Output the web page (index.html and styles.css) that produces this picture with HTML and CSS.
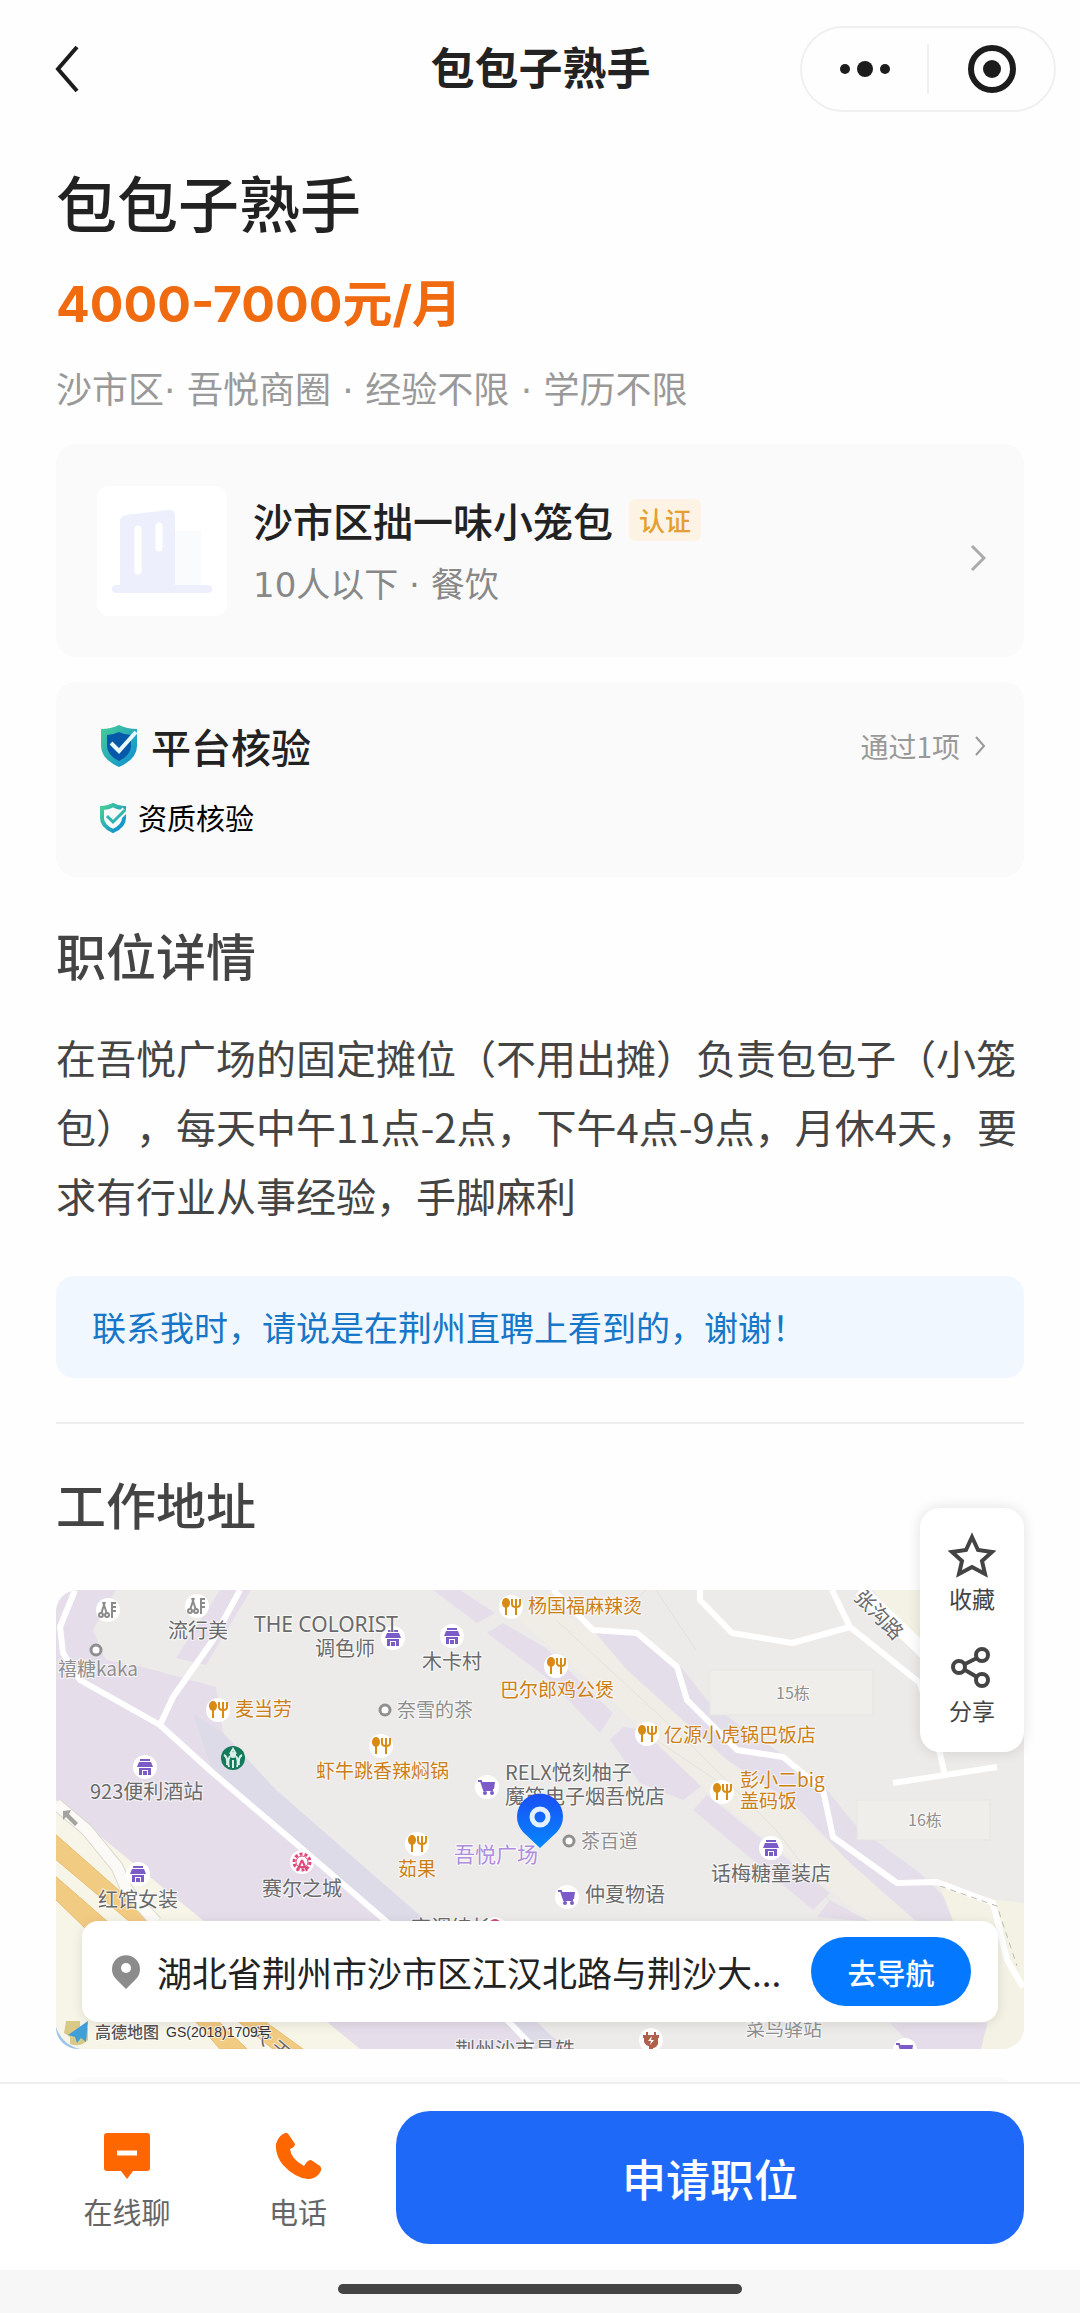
FILE: index.html
```html
<!DOCTYPE html>
<html lang="zh-CN">
<head>
  <meta charset="UTF-8">
  <meta name="viewport" content="width=device-width, initial-scale=1.0">
  <title>包包子熟手</title>
  <link rel="stylesheet" href="styles.css">
</head>

<body>

<header class="nav">
  <button class="back-btn" aria-label="返回">
    <svg width="24" height="48" viewBox="0 0 24 48"><path d="M22 2L3 24l19 22" fill="none" stroke="#1c1c1c" stroke-width="4"/></svg>
  </button>
  <div class="nav-title">包包子熟手</div>
  <div class="capsule">
    <button aria-label="更多">
      <svg width="54" height="20" viewBox="0 0 54 20" fill="#1c1c1c"><circle cx="7" cy="10" r="5"/><circle cx="27" cy="10" r="8"/><circle cx="47" cy="10" r="5"/></svg>
    </button>
    <button aria-label="关闭">
      <svg width="48" height="48" viewBox="0 0 48 48"><circle cx="24" cy="24" r="21" fill="none" stroke="#1c1c1c" stroke-width="6"/><circle cx="24" cy="24" r="9" fill="#1c1c1c"/></svg>
    </button>
  </div>
</header>

<main class="container">
  <h1>包包子熟手</h1>
  <div class="salary">4000-7000元/月</div>
  <div class="tags">沙市区· 吾悦商圈 · 经验不限 · 学历不限</div>

  <a class="card company" href="#">
    <svg class="company-logo" width="130" height="130" viewBox="0 0 130 130">
      <rect width="130" height="130" rx="12" fill="#fff"/>
      <path d="M78 45h26v54H78z" fill="#f9fbfc"/>
      <path d="M23 99V36q0-6 6-7l42-5q7-1 7 6v69z" fill="#eeeffc"/>
      <path d="M41 43v42M62 40v22" stroke="#fff" stroke-width="7" stroke-linecap="round"/>
      <path d="M19 103h92" stroke="#eeeffc" stroke-width="8" stroke-linecap="round"/>
    </svg>
    <div class="company-info">
      <div class="company-name">沙市区拙一味小笼包 <span class="badge">认证</span></div>
      <div class="company-sub">10人以下 · 餐饮</div>
    </div>
    <svg class="arrow" width="16" height="28" viewBox="0 0 16 28"><path d="M2 2l12 12L2 26" fill="none" stroke="#aaa" stroke-width="3"/></svg>
  </a>

  <section class="card verify">
    <div class="verify-head">
      <svg width="40" height="44" viewBox="0 0 40 44">
        <defs>
          <linearGradient id="shield" x1="0" y1="0" x2="1" y2="1"><stop offset="0" stop-color="#48cf94"/><stop offset="1" stop-color="#0b8bd8"/></linearGradient>
        </defs>
        <path d="M20 1q8 4 18 4v17q0 13-18 21Q2 35 2 22V5q10 0 18-4z" fill="url(#shield)"/>
        <path d="M20 8q6 3 12 3v11q0 9-12 15Q8 31 8 22V11q6 0 12-3z" fill="#0659a8"/>
        <path d="M12 19l8 8L37 8" fill="none" stroke="#e9fbff" stroke-width="4"/>
      </svg>
      <h2>平台核验</h2>
      <a class="verify-more" href="#">通过1项
        <svg width="12" height="20" viewBox="0 0 12 20"><path d="M2 1l8 9-8 9" fill="none" stroke="#999" stroke-width="2"/></svg>
      </a>
    </div>
    <div class="verify-item">
      <svg width="28" height="32" viewBox="0 0 28 32">
        <path d="M14 3q5 3 11 3v10q0 8-11 13Q3 24 3 16V6q6 0 11-3z" fill="none" stroke="url(#shield)" stroke-width="4"/>
        <path d="M8 14l6 6L26 8" fill="none" stroke="#fafafa" stroke-width="7"/>
        <path d="M8 14l6 6L26 8" fill="none" stroke="#2db3b0" stroke-width="3"/>
      </svg>
      资质核验
    </div>
  </section>

  <section class="detail">
    <h2>职位详情</h2>
    <p>在吾悦广场的固定摊位（不用出摊）负责包包子（小笼包），每天中午11点-2点，下午4点-9点，月休4天，要求有行业从事经验，手脚麻利</p>
    <div class="notice">联系我时，请说是在荆州直聘上看到的，谢谢！</div>
  </section>

  <section class="address">
    <h2>工作地址</h2>
    <div class="map">
      <svg class="map-canvas" viewBox="0 0 968 459">
        <defs>
          <g id="food">
            <circle r="12" fill="#fff"/>
            <ellipse cx="-5" cy="-4" rx="4" ry="5" fill="#d88a12"/>
            <path d="M-5 0v8M5-1v9M1-8v5q0 3 4 3t4-3v-5M5-8v8" fill="none" stroke="#d88a12" stroke-width="2"/>
          </g>
          <g id="shop">
            <circle r="12" fill="#fff"/>
            <path d="M-5-8H5V-6H-5zM-6-5H6L8 0H-8zM-6 1H6V8H3V3H-3V8H-6zM-2 4H2V8H-2z" fill="#7b5bc8"/>
          </g>
          <g id="cart">
            <circle r="12" fill="#fff"/>
            <path d="M-9-6h3l3 9h9" fill="none" stroke="#7b5bc8" stroke-width="2"/>
            <path d="M-5-5H8L7 2H-3z" fill="#7b5bc8"/>
            <circle cx="-2" cy="6" r="2" fill="#7b5bc8"/><circle cx="5" cy="6" r="2" fill="#7b5bc8"/>
          </g>
          <g id="scissors" fill="none" stroke="#8b8b8b" stroke-width="2">
            <circle r="12" fill="#fff" stroke="none"/>
            <path d="M-5-8L-1 4M-3-8L-7 4M4-8V8M4-7H8M4-3H8M4 1H8"/>
            <circle cx="-7" cy="5" r="2"/><circle cx="-1" cy="5" r="2"/>
          </g>
          <circle id="dot" r="5" fill="#fff" stroke="#8f8f8f" stroke-width="3"/>
        </defs>

        <rect width="968" height="459" fill="#ecebe9"/>

        <!-- blocks -->
        <g fill="#e5deea">
          <path d="M0 0h60L37 40l13 30 37 7 73 20 7 46 53 57 141 123 149 136H0z"/>
          <path d="M164 0h31l-45 75-30-7z"/>
          <path d="M377 0h27l35 23-18 10z"/>
          <path d="M431 43l16-10 43 25 67 65-13 20-54-56z"/>
          <path d="M567 137l40 5 44 50-24 18-43-17-30-43z"/>
          <path d="M651 205l123 98-17 17-120-100z"/>
          <path d="M774 310l40 22-53-5z"/>
        </g>
        <path d="M484 13l53 27 134 130 66 50 124 112h-47L651 202 540 95 460 28z" fill="#f0ede6"/>
        <path d="M537 40l44 3 44 34 30 38 72 50 44 35 30 37 63 46 77 76 27 60-107-87-67-59-57-60-66-43-100-90z" fill="#e4deea"/>
        <path d="M834 433h101l-10 26h-66z" fill="#e5deea"/>
        <path d="M167 143l53 57 141 123 149 136h-33L331 332 157 183l-20-60z" fill="#dedbe8"/>
        <path d="M0 210l304 249H0z" fill="#f7f4e8"/>
        <path d="M817 0h151v110L864 57zM884 297l57 13 27 3v146h-43l15-60-40-60z" fill="#f4f2e4"/>
        <path d="M590 0l-20 20M500 30l130 120 90 90 70 92M600 150l60 40M600 0l40 60" fill="none" stroke="#e3e1dd"/>

        <g fill="#f2cb83" stroke="#e8bd70">
          <path d="M-2 243l101 89 112 101 36 26h-30l-33-26L74 332-2 268z"/>
          <path d="M-2 285l54 47 112 101 27 26h-27l-23-26L31 340-2 308z"/>
        </g>

        <!-- footpaths and roads -->
        <g fill="none" stroke="#fff" stroke-width="6" stroke-linejoin="round">
          <path d="M19 0L4 37l3 26 17 27 80 45 53 48 87 74 87 75 123 101 23 24M184 0l-27 50-40 57-13 28"/>
          <path d="M497 0l40 40 44 3 40 34 10 33 50 50 46 7 40 33 10 47 64 46 40-1 56 21 14 57 16 27"/>
          <path d="M644 0v10l32 33 60 10 58-16M776 0l18 37 70 56 20 70 5 24M837 193l104-16"/>
          <path d="M804 0l80 77" stroke-width="14"/>
        </g>
        <path d="M0 214l31 26 30 37 10 23 29 32" fill="none" stroke="#dad8d0" stroke-width="13"/>
        <path d="M0 214l31 26 30 37 10 23 29 32" fill="none" stroke="#fbfaf6" stroke-width="11"/>
        <path d="M884 296l57 20 20 60" fill="none" stroke="#bdbab0" stroke-dasharray="6 5"/>
        <path d="M7 221l8-1-2 4 9 9-3 3-9-9-3 3z" fill="#a5a39e"/>

        <path d="M654 80h163v45H654zM801 210h133v40H801z" fill="#efeeeb" stroke="#e6e5e1"/>

        <!-- places -->
        <use href="#scissors" x="52" y="20"/>
        <use href="#scissors" x="141" y="16"/>
        <use href="#shop" x="337" y="48"/>
        <use href="#shop" x="396" y="46"/>
        <use href="#shop" x="89" y="177"/>
        <use href="#shop" x="82" y="284"/>
        <use href="#shop" x="715" y="258"/>
        <use href="#cart" x="431" y="197"/>
        <use href="#cart" x="511" y="307"/>
        <use href="#cart" x="849" y="460"/>
        <use href="#food" x="455" y="17"/>
        <use href="#food" x="162" y="120"/>
        <use href="#food" x="500" y="76"/>
        <use href="#food" x="591" y="144"/>
        <use href="#food" x="325" y="156"/>
        <use href="#food" x="666" y="202"/>
        <use href="#food" x="361" y="254"/>
        <use href="#dot" x="40" y="60"/>
        <use href="#dot" x="329" y="120"/>
        <use href="#dot" x="513" y="251"/>

        <g transform="translate(177 168)">
          <circle r="12" fill="#15795b"/>
          <circle r="3" cy="-3" fill="#d9efe7"/>
          <path d="M-3-4L0-9l3 5M-3-2q-3 5-1 11M3-2q3 5 1 11M-9-3q4 2 3 10M9-3q-4 2-3 10M0 2v8" fill="none" stroke="#d9efe7" stroke-width="2"/>
        </g>
        <g transform="translate(246 272)">
          <circle r="12" fill="#fff"/>
          <circle r="8" fill="none" stroke="#e0487c" stroke-width="3" stroke-dasharray="3 2"/>
          <circle r="6" fill="none" stroke="#e0487c"/>
          <path d="M0-2l-5 11M0-2l5 11M-3 5h6" fill="none" stroke="#e0487c" stroke-width="2"/>
        </g>
        <circle cx="439" cy="339" r="12" fill="#fff"/>
        <circle cx="439" cy="335" r="6" fill="#d8467a"/>
        <g transform="translate(595 450)">
          <circle r="12" fill="#fff"/>
          <path d="M-5-8h2v3h6v-3h2v3h3v3H7v6q-2 4-5 4v3h-4V6q-3 0-5-4v-4h-1v-3h3z" fill="#b0604c"/>
          <path d="M1-4l-4 5h3l-1 4 4-5H0z" fill="#fff"/>
        </g>

        <g class="label">
          <text x="112" y="48">流行美</text>
          <text class="latin" x="198" y="42">THE COLORIST</text>
          <text x="259" y="66">调色师</text>
          <text x="366" y="79">木卡村</text>
          <text x="34" y="209">923便利酒站</text>
          <text x="449" y="190">RELX悦刻柚子</text>
          <text x="449" y="214">魔笛电子烟吾悦店</text>
          <text x="206" y="306">赛尔之城</text>
          <text x="42" y="317">红馆女装</text>
          <text x="655" y="291">话梅糖童装店</text>
          <text x="529" y="312">仲夏物语</text>
          <text x="355" y="345">高调结长</text>
          <text x="399" y="467">荆州沙市昌轶</text>
          <text x="797" y="8" transform="rotate(46 797 8)">张沟路</text>
          <text x="194" y="444" transform="rotate(40 194 444)">大</text>
          <text x="212" y="460" transform="rotate(40 212 460)">天</text>
        </g>
        <g class="label label-light">
          <text x="2" y="86">禧糖kaka</text>
          <text x="341" y="127">奈雪的茶</text>
          <text x="525" y="258">茶百道</text>
          <text x="690" y="446">菜鸟驿站</text>
          <text class="small" x="720" y="109">15栋</text>
          <text class="small" x="852" y="236">16栋</text>
        </g>
        <g class="label label-food">
          <text x="472" y="23">杨国福麻辣烫</text>
          <text x="179" y="126">麦当劳</text>
          <text x="444" y="107">巴尔郎鸡公煲</text>
          <text x="608" y="152">亿源小虎锅巴饭店</text>
          <text x="260" y="188">虾牛跳香辣焖锅</text>
          <text x="684" y="197">彭小二big</text>
          <text x="684" y="218">盖码饭</text>
          <text x="342" y="286">茹果</text>
        </g>
        <text class="label label-mall" x="398" y="272">吾悦广场</text>

        <g transform="translate(0 429)">
          <path d="M0 8q6 18 24 22H0z" fill="#9cc4ee"/>
          <path d="M10 2h14v7h8v12q-8 8-18 4v-7l-6-4z" fill="#d9c987"/>
          <path d="M32 2L12 16l7 2 2 6 4-5 5 4z" fill="#3f9fd6"/>
        </g>
        <text class="label label-brand" x="39" y="448">高德地图</text>
        <text class="label label-licence" x="110" y="447">GS(2018)1709号</text>

        <!-- current position -->
        <defs><linearGradient id="pin" x1="0" y1="0" x2="0" y2="1"><stop offset="0" stop-color="#1a4ff5"/><stop offset="1" stop-color="#0587ff"/></linearGradient></defs>
        <path d="M484 258l-17-16a23 23 0 1 1 34 0z" fill="url(#pin)"/>
        <circle cx="484" cy="227" r="8" fill="none" stroke="#e4f0ff" stroke-width="5"/>
      </svg>

      <div class="address-bar">
        <svg width="28" height="34" viewBox="0 0 28 34"><path d="M14 34L4 24a14 14 0 1 1 20 0z" fill="#8c8c8c"/><circle cx="14" cy="13" r="5" fill="#fff"/></svg>
        <span class="address-text">湖北省荆州市沙市区江汉北路与荆沙大...</span>
        <button class="go-btn">去导航</button>
      </div>
    </div>

    <div class="float-panel">
      <button>
        <svg width="48" height="46" viewBox="0 0 48 46"><path d="M24 5l6 13 14 2-10 9 3 13-13-7-13 7 3-13L4 20l14-2z" fill="none" stroke="#444" stroke-width="4"/></svg>
        收藏
      </button>
      <button>
        <svg width="48" height="46" viewBox="0 0 48 46" fill="none" stroke="#444" stroke-width="4"><circle cx="11" cy="23" r="6"/><circle cx="34" cy="11" r="6"/><circle cx="34" cy="36" r="6"/><path d="M17 20l12-6M17 26l12 7"/></svg>
        分享
      </button>
    </div>
  </section>

  <div class="card next-card"></div>
</main>

<footer class="bottom-bar">
  <div class="actions">
    <button class="icon-btn">
      <svg width="48" height="48" viewBox="0 0 48 48"><path d="M4 1h40q3 0 3 3v32q0 3-3 3H30l-6 8-6-8H4q-3 0-3-3V4q0-3 3-3z" fill="#fe6700"/><path d="M14 21h20" stroke="#fff" stroke-width="5"/></svg>
      在线聊
    </button>
    <button class="icon-btn">
      <svg width="48" height="48" viewBox="0 0 48 48"><path d="M11 1q2-1 4 2l6 9q0 3-5 5 1 10 14 17 4-7 7-6l9 6q3 3-1 8-4 5-11 5Q21 46 9 33 1 23 2 12 4 4 11 1z" fill="#fe6700"/></svg>
      电话
    </button>
    <button class="apply-btn">申请职位</button>
  </div>
  <div class="home-area"><div class="home-line"></div></div>
</footer>

</body>
</html>
```
FILE: styles.css
```css
* {
  box-sizing: border-box;
}
body {
  font-family: "Noto Sans CJK SC", sans-serif;
  margin: 0;
  min-height: 100vh;
  background-color: #fefefe;
  color: #222;
  display: flex;
  flex-direction: column;
  text-spacing-trim: space-all;
}
button {
  font-family: inherit;
  border: none;
  background: none;
  padding: 0;
  cursor: pointer;
}
a {
  color: inherit;
  text-decoration: none;
}
h1, h2, p {
  margin: 0;
}
svg {
  display: block;
  flex-shrink: 0;
}

/* nav */
.nav {
  display: grid;
  grid-template-columns: 1fr auto 1fr;
  align-items: center;
  padding: 26px 24px 26px 55px;
}
.back-btn {
  justify-self: start;
}
.nav-title {
  padding-bottom: 6px;
  margin-right: 30px;
  font-size: 44px;
  line-height: 60px;
  font-weight: 700;
}
.capsule {
  justify-self: end;
  display: flex;
  align-items: center;
  width: 256px;
  height: 86px;
  border: 2px solid #f0f0f0;
  border-radius: 43px;
}
.capsule button {
  flex: 1;
  height: 50px;
  display: flex;
  align-items: center;
  justify-content: center;
}
.capsule button + button {
  border-left: 2px solid #f0f0f0;
}

.container {
  flex: 1;
  padding: 22px 56px 0;
}
h1 {
  font-size: 61px;
  line-height: 84px;
  font-weight: 500;
}
.salary {
  margin-top: 24px;
  font-family: Inter, "Noto Sans CJK SC", sans-serif;
  font-size: 50px;
  line-height: 72px;
  font-weight: 700;
  color: #f06a10;
}
.tags {
  margin: 24px 0 26px;
  font-family: "DejaVu Sans", "Noto Sans CJK SC", sans-serif;
  font-size: 36px;
  line-height: 54px;
  color: #999;
}

/* cards */
.card {
  background-color: #fafafa;
  border-radius: 20px;
}
.company {
  display: flex;
  align-items: center;
  gap: 26px;
  padding: 42px 38px 41px 41px;
}
.company-info {
  flex: 1;
}
.company-name {
  display: flex;
  align-items: center;
  gap: 16px;
  font-size: 40px;
  line-height: 60px;
  font-weight: 500;
}
.badge {
  padding: 0 10px;
  border-radius: 6px;
  background-color: #fdf3e4;
  color: #e3a02f;
  font-size: 26px;
  line-height: 42px;
}
.company-sub {
  margin-top: 8px;
  font-family: "DejaVu Sans", "Noto Sans CJK SC", sans-serif;
  font-size: 34px;
  line-height: 54px;
  color: #888;
}
.arrow {
  margin-top: 14px;
}
.verify {
  margin-top: 25px;
  padding: 34px 38px 38px 43px;
}
.verify-head, .verify-item {
  display: flex;
  align-items: center;
}
.verify-head {
  gap: 12px;
}
.verify h2 {
  flex: 1;
  font-size: 40px;
  line-height: 60px;
  font-weight: 500;
}
.verify-more {
  display: flex;
  align-items: center;
  gap: 14px;
  font-size: 28px;
  color: #999;
}
.verify-item {
  gap: 11px;
  margin-top: 20px;
  font-size: 29px;
  line-height: 43px;
  color: #000;
}

/* job detail */
.detail {
  padding: 40px 0 44px;
  border-bottom: 2px solid #eee;
}
.detail h2, .address h2 {
  font-size: 50px;
  line-height: 74px;
  font-weight: 500;
  color: #444;
}
.detail p {
  margin: 32px 0 46px;
  font-size: 40px;
  line-height: 69px;
  color: #444;
}
.notice {
  padding: 24px 36px;
  border-radius: 18px;
  background-color: #f0f7fe;
  font-size: 34px;
  line-height: 54px;
  color: #1676c8;
}

/* address and map */
.address {
  position: relative;
  padding-top: 42px;
}
.map {
  position: relative;
  margin-top: 50px;
  border-radius: 22px;
  overflow: hidden;
}
.map-canvas {
  width: 100%;
}
.label {
  font-size: 20px;
  fill: #6a6a6a;
  stroke: #fff;
  stroke-width: 2px;
  stroke-opacity: 0.7;
  paint-order: stroke;
}
.latin {
  font-family: "Noto Sans", sans-serif;
  font-size: 21px;
}
.label-light {
  fill: #8e8e8e;
  font-size: 19px;
}
.small {
  font-size: 16px;
}
.label-food {
  fill: #cb7f14;
  font-size: 19px;
}
.label-mall {
  fill: #b08cdc;
  font-size: 21px;
}
.label-brand {
  fill: #555;
  font-size: 16px;
  font-weight: 500;
}
.label-licence {
  font-family: "Liberation Sans", "Noto Sans CJK SC", sans-serif;
  font-size: 14px;
  fill: #333;
}
.address-bar {
  position: absolute;
  left: 26px;
  right: 26px;
  bottom: 27px;
  height: 101px;
  padding: 0 27px 0 30px;
  display: flex;
  align-items: center;
  gap: 17px;
  border-radius: 16px;
  background-color: #fff;
  box-shadow: 0 2px 12px rgba(0,0,0,0.1);
}
.address-text {
  flex: 1;
  font-size: 35px;
  white-space: nowrap;
}
.go-btn {
  width: 160px;
  height: 69px;
  border-radius: 35px;
  background-color: #0478ff;
  color: #fff;
  font-size: 29px;
  font-weight: 500;
}
.float-panel {
  position: absolute;
  top: 84px;
  right: 0;
  width: 104px;
  padding: 24px 0;
  display: flex;
  flex-direction: column;
  gap: 28px;
  border-radius: 20px;
  background-color: #fff;
  box-shadow: 0 0 14px rgba(0,0,0,0.12);
}
.float-panel button {
  display: flex;
  flex-direction: column;
  align-items: center;
  gap: 2px;
  font-size: 23px;
  line-height: 36px;
  color: #444;
}
.next-card {
  height: 60px;
  margin: 28px 8px -60px;
}

/* bottom bar */
.bottom-bar {
  position: fixed;
  left: 0;
  right: 0;
  bottom: 0;
  border-top: 2px solid #eee;
  background-color: #fff;
}
.actions {
  display: flex;
  align-items: center;
  padding: 27px 56px 26px 58px;
}
.icon-btn {
  width: 138px;
  padding-top: 8px;
  margin-right: 33px;
  display: flex;
  flex-direction: column;
  align-items: center;
  gap: 10px;
  font-size: 29px;
  line-height: 42px;
  color: #666;
}
.icon-btn + .icon-btn {
  margin-right: 29px;
}
.apply-btn {
  flex: 1;
  height: 133px;
  border-radius: 34px;
  background-color: #1e69f7;
  color: #fff;
  font-size: 44px;
  font-weight: 500;
}
.home-area {
  height: 43px;
  padding-top: 14px;
  background-color: #f7f7f7;
}
.home-line {
  width: 404px;
  height: 10px;
  margin: 0 auto;
  border-radius: 5px;
  background-color: #444;
}
```
